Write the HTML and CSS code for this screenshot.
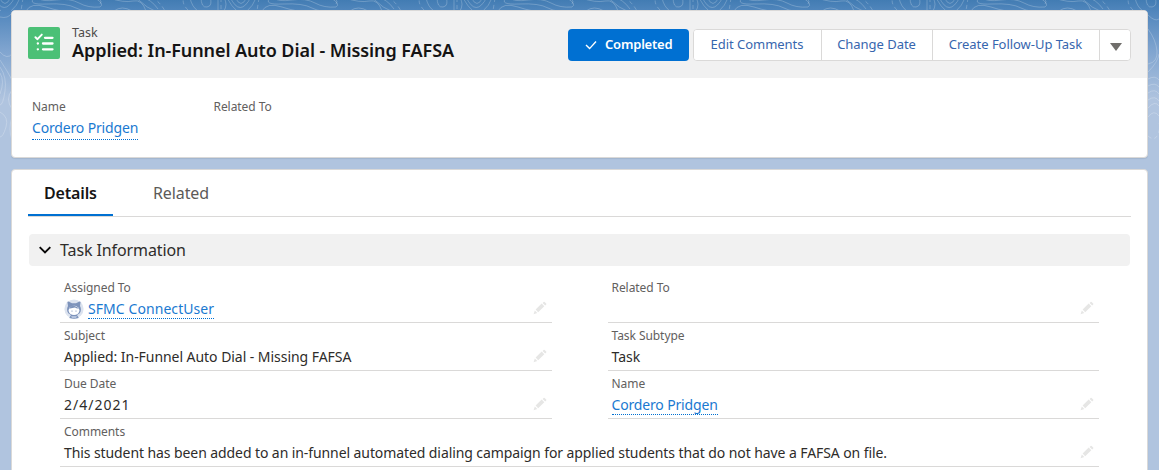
FILE: index.html
```html
<!DOCTYPE html>
<html lang="en">
<head>
<meta charset="utf-8">
<title>Task</title>
<link rel="stylesheet" href="styles.css">
</head>
<body>
<svg class="symbols" aria-hidden="true">
  <symbol id="pencil" viewBox="0 0 14 14"><path d="M2.6 8.6 8.7 2.6 11.3 5.2 5.2 11.3ZM9.6 1.9l1-1q.5-.4 1 0l1.6 1.6q.4.5 0 1l-1 1ZM1.8 9.6 4.3 12.1 .6 13.3Z"/></symbol>
</svg>
<svg class="contours" viewBox="0 0 1159 160" aria-hidden="true">
  <defs>
    <g id="topo">
      <path d="M190-2Q192 7 198 11M201-3Q201 8 207 7T210-3M218-2v13M224 11Q228 4 224-2M227-2Q232 7 237 11M230-3Q240 18 251-3M235-3Q241 10 247-3M247 11Q253 6 256-2"/>
      <path d="M262 11Q267 2 282 7T305 11M270-2Q263 5 283 4T312 8T340 11M274-2Q278 2 292 0T315 3T336 7Q341 4 331-2M328-3Q340-1 336 4M350 11Q358 5 368 11M345-2Q360 3 369 1T382 11M351-3Q369-6 376 1T391 11M377-3Q387-1 394 9"/>
      <path stroke-dasharray="4 3" d="M188 10Q181 3 184-3M221-2v13M259-2 257 11M388-3Q396 2 401 11"/>
    </g>
  </defs>
  <use href="#topo" x="-236"/>
  <use href="#topo"/>
  <use href="#topo" x="236"/>
  <use href="#topo" x="472"/>
  <use href="#topo" x="709"/>
  <use href="#topo" x="945"/>
  <path d="M0 52Q7 60 12 54M0 60Q8 72 12 80M0 67Q7 77 5 91T0 105M0 73Q5 81 0 94M12 90Q5 99 12 109M0 112Q9 117 6 127T0 137M12 117Q8 129 12 140M0 17Q8 19 12 13"/>
  <path d="M1148 29Q1156 40 1157 51T1148 64M1148 72Q1158 62 1159 54M1148 79Q1155 75 1159 80M1148 86Q1155 82 1159 87M1148 93Q1155 88 1159 94M1148 100Q1155 95 1159 101M1148 108Q1155 100 1159 106M1148 117Q1154 109 1159 116M1148 15Q1155 22 1159 19"/>
  <path stroke-dasharray="4 3" d="M1148 136Q1155 142 1158 134T1159 123"/>
</svg>

<main class="page">
  <section class="card summary">
    <header class="summary-head">
      <svg class="task-icon" viewBox="0 0 32 32"><g fill="none" stroke="#fff" stroke-width="1.9" stroke-linecap="round" stroke-linejoin="round"><path d="m7.4 10.2 2.1 2L13.8 7.6"/><path stroke-width="2.3" d="M17 10.8h7.5M15 16.5h9.5M15 22.3h9.5M9.8 16.5h.1M9.8 22.3h.1"/></g></svg>
      <div class="titles">
        <span class="kind">Task</span>
        <h1 class="title">Applied: In-Funnel Auto Dial - Missing FAFSA</h1>
      </div>
      <div class="actions">
        <button class="done"><svg class="check" viewBox="0 0 12 10"><path d="m1 5 3.6 3.6L11 1.5"/></svg><span class="done-text">Completed</span></button>
        <div class="button-group">
          <button class="action edit"><span>Edit Comments</span></button>
          <button class="action change"><span>Change Date</span></button>
          <button class="action follow"><span>Create Follow-Up Task</span></button>
          <button class="action more"><svg class="caret" viewBox="0 0 12 8"><path d="M0 0h12L6 8Z"/></svg></button>
        </div>
      </div>
    </header>
    <div class="summary-fields">
      <div class="summary-field"><span class="label">Name</span><a class="link person">Cordero Pridgen</a></div>
      <div class="summary-field"><span class="label">Related To</span></div>
    </div>
  </section>

  <section class="card detail">
    <nav class="tabs"><a class="tab active">Details</a><a class="tab">Related</a></nav>
    <h2 class="section-title"><svg class="chevron" viewBox="0 0 12 8"><path d="m.7 1.2 5.3 5.3 5.3-5.3"/></svg><span>Task Information</span></h2>
    <div class="fields">
      <div class="field"><span class="label">Assigned To</span><div class="value">
        <svg class="avatar" viewBox="0 0 20 20"><circle cx="10" cy="10" r="9.6" fill="#dce3ef"/><path fill="#7d93bb" d="M3.5 3.5Q3.2 2 5 2.7L8 4.3h4L15 2.7q1.8-.7 1.5.8L16 7q2 4-.3 7.3L13 16l1.8 3q-4.8 1.6-9.6 0L7 16l-2.7-1.7Q2 11 4 7Z"/><ellipse cx="10" cy="11.4" rx="5.4" ry="4.6" fill="#fff"/><path fill="#7d93bb" d="M5 9.4q2.5-3.4 5-2.7t5 2.7q-2.5.3-4-.8Q8 9.6 5 9.4Z"/><circle cx="8" cy="12" r=".6" fill="#7189b5"/><circle cx="12" cy="12" r=".6" fill="#7189b5"/><path d="M7 17h6l-1 2H8Z" fill="#b4c2dc"/></svg>
        <a class="link user">SFMC ConnectUser</a></div><svg class="pencil"><use href="#pencil"/></svg></div>
      <div class="field"><span class="label">Related To</span><div class="value"></div><svg class="pencil"><use href="#pencil"/></svg></div>
      <div class="field"><span class="label">Subject</span><div class="value subject"><span>Applied: In-Funnel Auto Dial - Missing FAFSA</span></div><svg class="pencil"><use href="#pencil"/></svg></div>
      <div class="field"><span class="label">Task Subtype</span><div class="value"><span>Task</span></div></div>
      <div class="field"><span class="label">Due Date</span><div class="value date"><span>2/4/2021</span></div><svg class="pencil"><use href="#pencil"/></svg></div>
      <div class="field"><span class="label">Name</span><div class="value"><a class="link person">Cordero Pridgen</a></div><svg class="pencil"><use href="#pencil"/></svg></div>
      <div class="field wide"><span class="label">Comments</span><div class="value comments"><span>This student has been added to an in-funnel automated dialing campaign for applied students that do not have a FAFSA on file.</span></div><svg class="pencil"><use href="#pencil"/></svg></div>
    </div>
  </section>
</main>
</body>
</html>
```
FILE: styles.css
```css
* { box-sizing: border-box; }
body {
  margin: 0;
  height: 470px;
  overflow: hidden;
  background: #b0c4df linear-gradient(#427cb3 0, #5287bd 12px, #7fa4cf 50px, #b0c4df 100px) no-repeat;
  font-family: "Noto Sans", sans-serif;
  font-size: 13px;
  font-weight: 400;
  color: #2e2c2a;
}
button { font: inherit; margin: 0; }
.symbols { position: absolute; width: 0; height: 0; }
.contours { position: absolute; top: 0; left: 0; width: 1159px; height: 160px; fill: none; stroke: #fff; stroke-opacity: .22; stroke-width: 1; }
.page { position: relative; display: flex; flex-direction: column; gap: 11px; height: 470px; padding: 10px 11px 0; overflow: hidden; }
.card { flex: none; background: #fff; border: 1px solid #dad9d8; border-radius: 4px; box-shadow: 0 1px 1px rgba(0, 0, 0, .08); }
.summary { height: 148px; }
.summary-head { display: flex; height: 67px; padding: 16px 16px 0; border-radius: 3px 3px 0 0; background: #f1f1f1; }
.task-icon { width: 32px; height: 32px; border-radius: 2px; background: #4bc076; }
.titles { display: flex; flex-direction: column; margin-left: 12px; }
.kind { height: 14px; line-height: 12px; font-size: 12.5px; color: #4d4b49; }
.title { margin: 0; font-size: 18px; line-height: 19px; font-weight: 600; color: #151414; white-space: nowrap; letter-spacing: -.08px; }
.actions { display: flex; gap: 4px; margin-left: auto; padding-top: 2px; }
.done { display: flex; align-items: center; width: 121px; height: 32px; padding: 0 0 0 17px; border: 0; border-radius: 4px; background: #0070d2; color: #fff; font-weight: 600; letter-spacing: -.2px; }
.done-text { padding-bottom: 2px; }
.check { width: 12px; height: 10px; margin-right: 8px; fill: none; stroke: #fff; stroke-width: 1.4; }
.button-group { display: flex; height: 32px; border: 1px solid #dad9d8; border-radius: 4px; background: #fff; overflow: hidden; }
.action { display: flex; align-items: center; justify-content: center; padding: 0 1px 2px 0; border: 0; border-right: 1px solid #dad9d8; background: #fff; color: #3766ae; white-space: nowrap; letter-spacing: -.04px; }
.edit { width: 128px; }
.change { width: 111px; }
.follow { width: 167px; }
.more { width: 30px; border-right: 0; padding: 4px 0 0 2px; }
.caret { width: 12px; height: 8px; fill: #706e6b; }
.summary-fields { display: flex; padding: 20px 20px 0; }
.summary-field { display: flex; flex-direction: column; align-items: flex-start; width: 181.5px; }
.label { display: block; font-size: 12px; line-height: 18px; color: #62605e; letter-spacing: -.06px; }
.link { color: #1a79d1; border-bottom: 1px dotted #0070d2; height: 19px; line-height: 18px; white-space: nowrap; font-size: 14px; }
.person { letter-spacing: -.16px; }
.user { letter-spacing: .07px; }
.summary-field .link { height: 24px; line-height: 24px; }
.detail { height: 330px; padding: 0 16px; }
.tabs { display: flex; height: 47px; border-bottom: 1px solid #dad9d8; font-size: 16px; line-height: 47px; }
.tab { height: 46px; color: #5c5a58; padding-left: 40px; letter-spacing: -.1px; }
.tab.active { width: 85px; padding-left: 16px; color: #151414; font-weight: 600; letter-spacing: -.15px; border-bottom: 2px solid #0070d2; }
.section-title { display: flex; align-items: center; height: 32px; margin: 17px 1px 0 1px; padding-left: 10px; border-radius: 4px; background: #f1f1f1; font-size: 16px; font-weight: 400; letter-spacing: -.1px; color: #2e2c2a; }
.chevron { width: 12px; height: 8px; margin-right: 9px; fill: none; stroke: #080707; stroke-width: 1.9; }
.fields { display: grid; grid-template-columns: 492px 491px; column-gap: 56px; grid-auto-rows: 48px; margin: 9px 0 0 32px; }
.field { position: relative; border-bottom: 1px solid #dad9d8; padding: 4px 4px 0; }
.field:nth-child(even) { padding-left: 3.5px; }
.value { display: flex; align-items: flex-start; height: 22px; padding-top: 2px; font-size: 14px; line-height: 20px; white-space: nowrap; }
.value .link { margin-top: 1px; }
.wide { grid-column: 1 / -1; }
.subject { letter-spacing: -.05px; }
.date { letter-spacing: 1px; }
.comments { letter-spacing: -.088px; }
.avatar { width: 20px; height: 20px; margin-right: 4px; }
.pencil { position: absolute; right: 5px; bottom: 7px; width: 14px; height: 14px; fill: #e6e6e5; }
```
